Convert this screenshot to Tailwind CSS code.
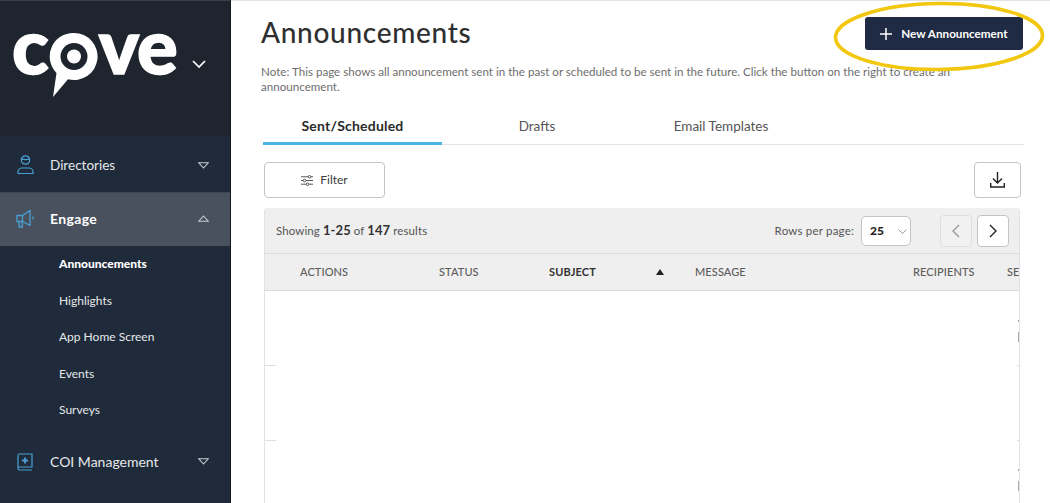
<!DOCTYPE html>
<html>
<head>
<meta charset="utf-8">
<script src="https://cdn.jsdelivr.net/npm/@tailwindcss/browser@4"></script>
</head>
<body class="m-0 overflow-hidden bg-white">
<div class="relative flex h-[503px] w-[1050px] overflow-hidden bg-white font-['Lato','Noto_Sans',sans-serif] text-[#3a3a3a]">

  <!-- Sidebar -->
  <aside class="flex h-full w-[231px] shrink-0 flex-col border-r border-[#14191f] bg-[#1f2b3a]">
    <div class="flex h-[136px] shrink-0 items-start border-t border-[#3b4046] bg-[#1f252e] pl-[12px] pt-[6px]">
      <div class="flex h-[90px] items-start font-['Lato',sans-serif] text-[76px] leading-[76px] font-black tracking-[-1px] text-white [-webkit-text-stroke:1.5px_white]">
        <span>c</span>
        <svg class="mx-[-1px] mt-[25px] h-[66px] w-[54px] shrink-0" viewBox="0 0 54 66">
          <path d="M27 1a23.500 23.500 0 1 1-6 46.200L6 65l3.500-24A23.500 23.500 0 0 1 27 1z" fill="#fff"/>
          <circle cx="27" cy="24.500" r="13.500" fill="#1f252e"/>
          <circle cx="27" cy="24.500" r="7" fill="#fff"/>
        </svg>
        <span class="ml-[-1px]">ve</span>
      </div>
      <svg class="ml-[15px] mt-[52px] h-[10px] w-[14px]" viewBox="0 0 14 10" fill="none" stroke="#fff" stroke-width="1.700"><path d="M1 2l6 6 6-6"/></svg>
    </div>

    <div class="flex h-[56px] items-center pl-[17px] pr-[21px] pt-[2px] text-[#e6e8ea]">
      <svg class="h-[20px] w-[17px]" viewBox="0 0 17 20" fill="none" stroke="#4a9fd4" stroke-width="1.200">
        <circle cx="8.500" cy="5" r="4.200"/><path d="M4.500 4.200c2.500.6 5.500.6 8 0"/>
        <path d="M1 18.500v-1.500a4 4 0 0 1 4-4h7a4 4 0 0 1 4 4v1.500z"/>
      </svg>
      <span class="ml-[16px] flex-1 text-[13.500px]">Directories</span>
      <svg class="h-[7px] w-[11px]" viewBox="0 0 11 7" fill="none" stroke="#c7ccd2" stroke-width="1.100"><path d="M.8.8h9.400L5.500 6z"/></svg>
    </div>

    <div class="flex h-[54px] items-center border-t border-[#3d4754] bg-[#48515d] pb-[2px] pl-[16px] pr-[21px] text-white">
      <svg class="h-[20px] w-[18px]" viewBox="0 0 18 20" fill="none" stroke="#4a9fd4" stroke-width="1.300" stroke-linejoin="round">
        <path d="M1 6.500h5.500L14 1.500v15l-7.500-4H1z"/><path d="M6.500 6.500v6M3 12.500v5.500h3.500l-.5-5.500"/><path d="M17 7.500v3"/>
      </svg>
      <span class="ml-[16px] flex-1 text-[14px] font-bold tracking-[0.35px]">Engage</span>
      <svg class="h-[7px] w-[11px]" viewBox="0 0 11 7" fill="none" stroke="#c7ccd2" stroke-width="1.100"><path d="M.8 6.200h9.400L5.500 1z"/></svg>
    </div>

    <nav class="flex flex-col pl-[59px] text-[12px] leading-[20px] text-[#e6e8ea]">
      <a class="flex h-[36.500px] items-center font-black text-white">Announcements</a>
      <a class="flex h-[36.500px] items-center">Highlights</a>
      <a class="flex h-[36.500px] items-center">App Home Screen</a>
      <a class="flex h-[36.500px] items-center">Events</a>
      <a class="flex h-[36.500px] items-center">Surveys</a>
    </nav>

    <div class="mt-[15px] flex h-[36px] items-center pl-[17px] pr-[21px] text-[#e6e8ea]">
      <svg class="h-[18px] w-[16px]" viewBox="0 0 16 18" fill="none" stroke="#4a9fd4" stroke-width="1.200">
        <path d="M1 15V2.500A1.500 1.500 0 0 1 2.500 1H15v13H2.500a1.500 1.500 0 0 0 0 3H15"/>
        <path d="M8 4.500v6M5 7.500h6" stroke-width="1.800"/>
      </svg>
      <span class="ml-[17px] flex-1 text-[14px]">COI Management</span>
      <svg class="h-[7px] w-[11px]" viewBox="0 0 11 7" fill="none" stroke="#c7ccd2" stroke-width="1.100"><path d="M.8.8h9.400L5.500 6z"/></svg>
    </div>
  </aside>

  <!-- Main -->
  <main class="flex min-w-0 flex-1 flex-col border-t border-[#e2e2e2] pl-[30px] pr-[26px]">
    <div class="flex h-[63px] shrink-0 items-start justify-between">
      <h1 class="mt-[14px] text-[28px] leading-[34px] font-medium tracking-[0.7px] text-[#2f2f2f]">Announcements</h1>
      <button class="mt-[16px] mr-[1px] flex h-[33px] w-[158px] items-center justify-center gap-[9px] rounded-[3px] bg-[#1f2a44] text-[11.700px] font-bold text-white">
        <svg class="h-[12px] w-[12px]" viewBox="0 0 12 12" stroke="#fff" stroke-width="1.500"><path d="M6 0v12M0 6h12"/></svg>
        New Announcement
      </button>
    </div>

    <p class="w-[695px] text-[11.600px] leading-[15px] text-[#6e6e6e]">Note: This page shows all announcement sent in the past or scheduled to be sent in the future. Click the button on the right to create an announcement.</p>

    <div class="mt-[11px] ml-[2px] flex h-[40px] w-[761px] shrink-0 border-b border-[#e4e4e4] text-[13.500px]">
      <div class="flex h-[40px] w-[179px] items-start justify-center border-b-[3px] border-[#4cb3e6] pt-[10px] text-[14px] font-bold tracking-[0.2px] text-[#2a2a2a]">Sent/Scheduled</div>
      <div class="flex w-[190px] justify-center pt-[11px] text-[#555]">Drafts</div>
      <div class="flex w-[178px] justify-center pt-[11px] text-[#555]">Email Templates</div>
    </div>

    <div class="mt-[17px] ml-[3px] flex h-[37px] w-[757px] shrink-0 justify-between">
      <button class="flex h-[36px] w-[121px] items-center justify-center gap-[7px] rounded-[4px] border border-[#c4c4c4] bg-white text-[12px] text-[#3a3a3a]">
        <svg class="h-[11px] w-[12px]" viewBox="0 0 12 11" fill="none" stroke="#444" stroke-width=".9">
          <path d="M0 1.800h7M10 1.800h2M0 5.500h2M5 5.500h7M0 9.200h5M8 9.200h4"/>
          <circle cx="8.500" cy="1.800" r="1.300"/><circle cx="3.500" cy="5.500" r="1.300"/><circle cx="6.500" cy="9.200" r="1.300"/>
        </svg>
        Filter
      </button>
      <button class="flex h-[36px] w-[47px] items-center justify-center rounded-[4px] border border-[#c4c4c4] bg-white">
        <svg class="h-[16px] w-[15px]" viewBox="0 0 15 16" fill="none" stroke="#222" stroke-width="1.400">
          <path d="M7.500 0v10.500M3 6.500l4.500 4.500L12 6.500M.7 11v4h13.600v-4"/>
        </svg>
      </button>
    </div>

    <!-- Table -->
    <section class="relative mt-[9px] ml-[3px] h-[306px] w-[756px] shrink-0 rounded-t-[4px] border-x border-[#e2e2e2] bg-white">
      <div class="flex h-[46px] items-center border-b border-[#dcdcdc] bg-[#efefef] pl-[11px] pr-[10px] pt-[1px] text-[11.500px] text-[#555]">
        <span class="flex-1 tracking-[0.1px]">Showing <b class="text-[13px] font-bold text-[#333]">1-25</b> of <b class="text-[13px] font-bold text-[#333]">147</b> results</span>
        <span class="tracking-[0.2px]">Rows per page:</span>
        <div class="ml-[7px] flex h-[30px] w-[50px] items-center justify-between rounded-[5px] border border-[#c4c4c4] bg-white pl-[8px] pr-[3px] text-[12px] font-black text-[#222]">
          25
          <svg class="h-[5px] w-[9px]" viewBox="0 0 9 5" fill="none" stroke="#888" stroke-width=".9"><path d="M.5.500l4 4 4-4"/></svg>
        </div>
        <button class="ml-[29px] flex h-[32px] w-[32px] items-center justify-center rounded-[4px] border border-[#dedede] bg-[#f1f1f1]">
          <svg class="h-[14px] w-[8px]" viewBox="0 0 8 14" fill="none" stroke="#9a9a9a" stroke-width="1.400"><path d="M7 1L1 7l6 6"/></svg>
        </button>
        <button class="ml-[5px] flex h-[32px] w-[32px] items-center justify-center rounded-[4px] border border-[#c4c4c4] bg-white">
          <svg class="h-[14px] w-[8px]" viewBox="0 0 8 14" fill="none" stroke="#222" stroke-width="1.400"><path d="M1 1l6 6-6 6"/></svg>
        </button>
      </div>

      <div class="flex h-[37px] items-center overflow-hidden border-b border-[#dcdcdc] bg-[#efefef] text-[11px] font-medium tracking-[0.1px] text-[#5c5c5c]">
        <span class="ml-[35px] w-[139px] shrink-0">ACTIONS</span>
        <span class="w-[110px] shrink-0">STATUS</span>
        <span class="w-[107px] shrink-0 font-bold text-[#333]">SUBJECT</span>
        <svg class="mr-[31px] h-[6px] w-[8px] shrink-0" viewBox="0 0 8 6" fill="#222"><path d="M4 0l4 6H0z"/></svg>
        <span class="w-[218px] shrink-0">MESSAGE</span>
        <span class="w-[94px] shrink-0">RECIPIENTS</span>
        <span class="shrink-0">SE</span>
      </div>

      <div class="absolute left-0 top-[157px] h-px w-[11px] bg-[#dedede]"></div>
      <div class="absolute left-0 top-[232px] h-px w-[11px] bg-[#dedede]"></div>
      <div class="absolute right-0 top-[157px] h-px w-[2px] bg-[#dedede]"></div>
      <div class="absolute right-0 top-[232px] h-px w-[2px] bg-[#dedede]"></div>
      <div class="absolute right-0 top-[112px] h-[2px] w-[1px] bg-[#aaa]"></div>
      <div class="absolute right-0 top-[124px] h-[10px] w-[1px] bg-[#aaa]"></div>
      <div class="absolute right-0 top-[261px] h-[2px] w-[1px] bg-[#aaa]"></div>
      <div class="absolute right-0 top-[273px] h-[10px] w-[1px] bg-[#aaa]"></div>
    </section>
  </main>

  <!-- Hand-drawn highlight annotation -->
  <svg class="absolute left-[832px] top-0 h-[74px] w-[214px]" viewBox="0 0 214 74" fill="none">
    <ellipse cx="107" cy="36.500" rx="103.500" ry="33" stroke="#f2c70f" stroke-width="3.600" transform="rotate(-.6 107 36.500)"/>
  </svg>
</div>
</body>
</html>
